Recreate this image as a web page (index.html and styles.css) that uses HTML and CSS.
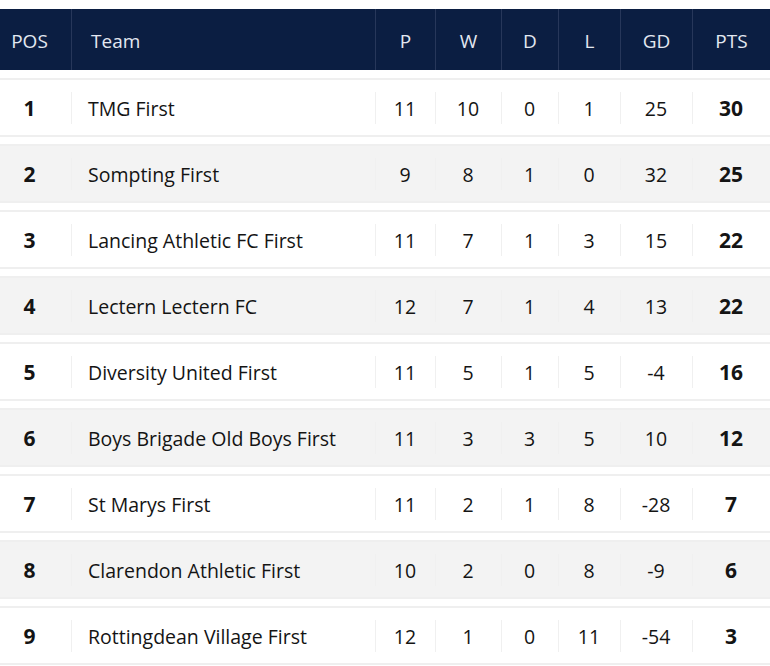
FILE: index.html
```html
<!DOCTYPE html>
<html lang="en">
<head>
<meta charset="utf-8">
<title>League Table</title>
<link rel="stylesheet" href="styles.css">
</head>
<body>
<div class="table">
  <div class="row head">
    <div class="c pos">POS</div>
    <div class="c team">Team</div>
    <div class="c">P</div>
    <div class="c">W</div>
    <div class="c">D</div>
    <div class="c">L</div>
    <div class="c">GD</div>
    <div class="c">PTS</div>
  </div>
  <div class="row">
    <div class="c pos b">1</div><div class="c team">TMG First</div>
    <div class="c">11</div><div class="c">10</div><div class="c">0</div><div class="c">1</div><div class="c">25</div><div class="c b">30</div>
  </div>
  <div class="row alt">
    <div class="c pos b">2</div><div class="c team">Sompting First</div>
    <div class="c">9</div><div class="c">8</div><div class="c">1</div><div class="c">0</div><div class="c">32</div><div class="c b">25</div>
  </div>
  <div class="row">
    <div class="c pos b">3</div><div class="c team">Lancing Athletic FC First</div>
    <div class="c">11</div><div class="c">7</div><div class="c">1</div><div class="c">3</div><div class="c">15</div><div class="c b">22</div>
  </div>
  <div class="row alt">
    <div class="c pos b">4</div><div class="c team">Lectern Lectern FC</div>
    <div class="c">12</div><div class="c">7</div><div class="c">1</div><div class="c">4</div><div class="c">13</div><div class="c b">22</div>
  </div>
  <div class="row">
    <div class="c pos b">5</div><div class="c team">Diversity United First</div>
    <div class="c">11</div><div class="c">5</div><div class="c">1</div><div class="c">5</div><div class="c">-4</div><div class="c b">16</div>
  </div>
  <div class="row alt">
    <div class="c pos b">6</div><div class="c team">Boys Brigade Old Boys First</div>
    <div class="c">11</div><div class="c">3</div><div class="c">3</div><div class="c">5</div><div class="c">10</div><div class="c b">12</div>
  </div>
  <div class="row">
    <div class="c pos b">7</div><div class="c team">St Marys First</div>
    <div class="c">11</div><div class="c">2</div><div class="c">1</div><div class="c">8</div><div class="c">-28</div><div class="c b">7</div>
  </div>
  <div class="row alt">
    <div class="c pos b">8</div><div class="c team">Clarendon Athletic First</div>
    <div class="c">10</div><div class="c">2</div><div class="c">0</div><div class="c">8</div><div class="c">-9</div><div class="c b">6</div>
  </div>
  <div class="row">
    <div class="c pos b">9</div><div class="c team">Rottingdean Village First</div>
    <div class="c">12</div><div class="c">1</div><div class="c">0</div><div class="c">11</div><div class="c">-54</div><div class="c b">3</div>
  </div>
</div>
</body>
</html>
```

FILE: styles.css
```css
html, body {
  margin: 0;
  padding: 0;
  background: #ffffff;
}
body {
  font-family: "Open Sans", "Noto Sans", "Liberation Sans", sans-serif;
  color: #141414;
  overflow: hidden;
}
.table {
  display: flex;
  flex-direction: column;
  gap: 7px;
  padding-top: 9px;
}
.row {
  display: grid;
  grid-template-columns: 71px 304px 60px 66px 57px 62px 72px 78px;
  height: 55px;
  border-top: 2px solid #efefef;
  border-bottom: 2px solid #efefef;
  background: #ffffff;
}
.row.alt {
  background: #f3f3f3;
}
.row.head {
  height: 61px;
  border: none;
  background: #0b1e42;
  color: #e3e8f1;
  margin-bottom: 1px;
}
.c {
  display: flex;
  align-items: center;
  justify-content: center;
  font-size: 19.5px;
  padding-top: 1px;
  background: linear-gradient(#f0f0f0, #f0f0f0) left center / 1px 32px no-repeat;
}
.c.pos {
  background: none;
  padding-right: 12px;
}
.head .c {
  font-size: 19px;
  padding-top: 3px;
  background: none;
  border-left: 1px solid #27375a;
}
.head .c.pos {
  border-left: none;
}
.c.team {
  justify-content: flex-start;
  padding-left: 17px;
}
.head .c.team {
  padding-left: 19px;
}
.b {
  font-weight: 700;
  font-size: 21px;
}
```
